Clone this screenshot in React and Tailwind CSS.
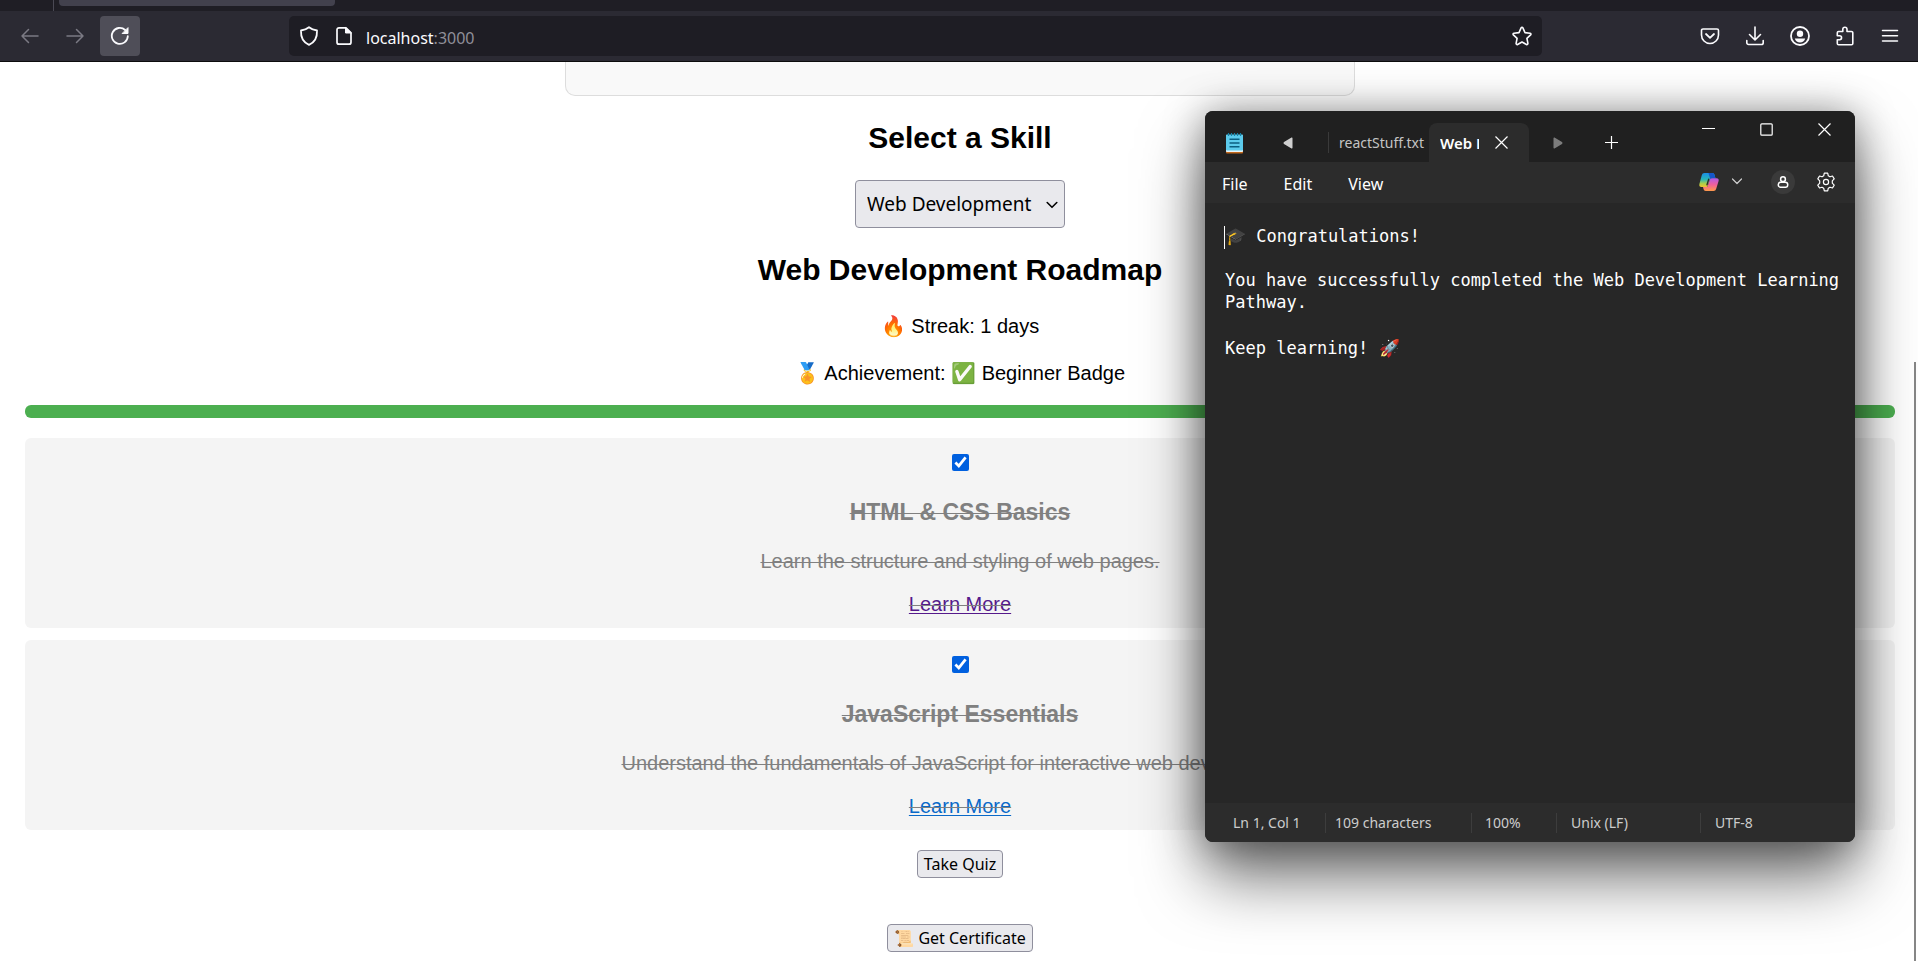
import React, { useState } from 'react';

const UI = 'font-["Noto_Sans",sans-serif]';

/* ---------- browser chrome icons ---------- */

function Icon({ children, className = 'size-5', box = 20 }) {
  return (
    <svg
      viewBox={`0 0 ${box} ${box}`}
      className={className}
      fill="none"
      stroke="currentColor"
      strokeWidth="1.5"
      strokeLinecap="round"
      strokeLinejoin="round"
      aria-hidden="true"
    >
      {children}
    </svg>
  );
}

const BackIcon = () => (
  <Icon>
    <path d="M18 10H2M8.5 3.5 2 10l6.5 6.5" />
  </Icon>
);
const ForwardIcon = () => (
  <Icon>
    <path d="M2 10h16M11.5 3.5 18 10l-6.5 6.5" />
  </Icon>
);
const ReloadIcon = () => (
  <Icon>
    <path strokeWidth="1.8" d="M17.8 10.2A8 8 0 1 1 15.2 4" />
    <path fill="currentColor" strokeWidth="1" d="M18 2v5.5h-5.5z" />
  </Icon>
);
const ShieldIcon = () => (
  <Icon>
    <path
      strokeWidth="1.8"
      d="M10 1.2c2.2 1.8 4.7 2.8 8 3.3.3 6.5-2 11.8-8 14.3-6-2.5-8.3-7.8-8-14.3 3.3-.5 5.8-1.5 8-3.3z"
    />
  </Icon>
);
const PageIcon = () => (
  <Icon>
    <path strokeWidth="1.7" d="M12 1.8H5A2 2 0 0 0 3 3.8v12.4a2 2 0 0 0 2 2h10a2 2 0 0 0 2-2V6.8z" />
    <path fill="currentColor" strokeWidth="1" d="M11.5 1.8v5.2H17z" />
  </Icon>
);
const StarIcon = () => (
  <Icon>
    <path
      strokeWidth="1.6"
      d="M10 1.3c.4 0 .7.2.9.6l2.1 4.7 5 .6c.9.1 1.2 1.1.6 1.7l-3.7 3.5 1 5c.1.9-.7 1.5-1.5 1.1L10 16l-4.4 2.5c-.8.4-1.6-.2-1.5-1.1l1-5-3.700-3.500c-.6-.6-.3-1.600.6-1.700l5-.6 2.100-4.700c.2-.4.5-.6.9-.6z"
    />
  </Icon>
);
const PocketIcon = () => (
  <Icon>
    <path strokeWidth="1.6" d="M3 3h14a1.5 1.5 0 0 1 1.5 1.5V9a8.500 8.500 0 0 1-17 0V4.500A1.500 1.500 0 0 1 3 3z" />
    <path strokeWidth="1.8" d="m6 8 4 3.800L14 8" />
  </Icon>
);
const DownloadIcon = () => (
  <Icon>
    <path strokeWidth="1.6" d="M10 1v12.500M4.500 8.500 10 14l5.500-5.500M1.800 14.500v2.200a1.800 1.800 0 0 0 1.800 1.800h12.800a1.800 1.800 0 0 0 1.800-1.800v-2.200" />
  </Icon>
);
const AccountIcon = () => (
  <Icon>
    <circle cx="10" cy="10" r="9" strokeWidth="1.8" />
    <circle cx="10" cy="7.8" r="3.2" fill="currentColor" stroke="none" />
    <path fill="currentColor" stroke="none" d="M4.800 12.600h10.400c-.7 2.500-2.700 4-5.200 4s-4.500-1.500-5.200-4z" />
  </Icon>
);
const ExtensionIcon = () => (
  <Icon>
    <path
      strokeWidth="1.6"
      d="M7.800 5.500V3.300a2.100 2.100 0 0 1 4.200 0v2.200h4.500a1.300 1.300 0 0 1 1.300 1.300v10.600a1.300 1.300 0 0 1-1.300 1.300H3.600a1.300 1.300 0 0 1-1.300-1.300v-3.700h2.300a1.900 1.900 0 0 0 0-3.900H2.300v-3a1.300 1.300 0 0 1 1.300-1.300z"
    />
  </Icon>
);
const MenuIcon = () => (
  <Icon>
    <path d="M2.500 4.500h15M2.500 9.700h15M2.500 14.900h15" />
  </Icon>
);

function ChromeButton({ label, className = '', children }) {
  return (
    <button type="button" aria-label={label} className={`flex h-10 w-10 items-center justify-center rounded ${className}`}>
      {children}
    </button>
  );
}

function Browser() {
  return (
    <header className="bg-[#1f1e25] text-[#fbfbfe]">
      <div className="flex h-[11px]">
        <div className="w-[54px] border-r border-[#4a4954]" />
        <div className="ml-[5px] h-[6px] w-[276px] rounded-b bg-[#42414d]" />
      </div>
      <div className="flex h-[51px] items-center border-b border-[#0c0c0d] bg-[#2b2a33]">
        <nav className="flex w-[289px] gap-[5px] pl-[10px]">
          <ChromeButton label="Back" className="text-[#7b7a84]">
            <BackIcon />
          </ChromeButton>
          <ChromeButton label="Forward" className="text-[#7b7a84]">
            <ForwardIcon />
          </ChromeButton>
          <ChromeButton label="Reload" className="bg-[#4f4e58]">
            <ReloadIcon />
          </ChromeButton>
        </nav>
        <div className="flex h-10 flex-1 items-center rounded-[5px] bg-[#1e1d24] pl-[10px]">
          <ShieldIcon />
          <span className="ml-[15px]">
            <PageIcon />
          </span>
          <span className={`ml-3 flex-1 pt-1 text-base leading-6 ${UI}`}>
            localhost<span className="text-[#8f8f99]">:3000</span>
          </span>
          <ChromeButton label="Bookmark this page">
            <StarIcon />
          </ChromeButton>
        </div>
        <div className="flex w-[376px] justify-end gap-[5px] pr-2">
          <ChromeButton label="Save to Pocket">
            <PocketIcon />
          </ChromeButton>
          <ChromeButton label="Downloads">
            <DownloadIcon />
          </ChromeButton>
          <ChromeButton label="Account">
            <AccountIcon />
          </ChromeButton>
          <ChromeButton label="Extensions">
            <ExtensionIcon />
          </ChromeButton>
          <ChromeButton label="Menu">
            <MenuIcon />
          </ChromeButton>
        </div>
      </div>
    </header>
  );
}

/* ---------- web page ---------- */

const STEPS = [
  {
    id: 'html',
    title: 'HTML & CSS Basics',
    text: 'Learn the structure and styling of web pages.',
    link: 'text-[#551a8b]',
  },
  {
    id: 'js',
    title: 'JavaScript Essentials',
    text: 'Understand the fundamentals of JavaScript for interactive web development.',
    link: 'text-[#0969c8]',
  },
];

function Step({ step }) {
  const [done, setDone] = useState(true);
  return (
    <li
      className={`flex flex-col items-center rounded-md bg-[#f4f4f4] pt-4 pb-3 ${
        done ? 'text-[#808080] line-through decoration-1' : 'text-black'
      }`}
    >
      <input
        type="checkbox"
        aria-label={step.title}
        checked={done}
        onChange={() => setDone(!done)}
        className="size-[17px] accent-[#0060df]"
      />
      <h3 className="mt-7 text-[23px] leading-[26px] font-bold">{step.title}</h3>
      <p className="mt-[25px] text-xl leading-[23px]">{step.text}</p>
      <p className="mt-5 text-xl leading-[23px]">
        <a href={`#${step.id}`} className={`underline decoration-1 underline-offset-2 ${step.link}`}>
          Learn More
        </a>
      </p>
    </li>
  );
}

function PageButton({ className, children }) {
  return (
    <button
      type="button"
      className={`rounded border border-[#8f8f9d] bg-[#e9e9ed] px-1.5 text-base leading-[26px] text-black ${UI} ${className}`}
    >
      {children}
    </button>
  );
}

function Page() {
  return (
    <main className='flex flex-col items-center pr-[23px] pl-[25px] font-["Liberation_Sans",Arial,sans-serif] text-black'>
      <div className="h-[34px] w-[790px] rounded-b-[10px] border border-t-0 border-[#dddddd] bg-[#f9f9f9]" />
      <h2 className="mt-[25px] text-3xl leading-[34px] font-bold">Select a Skill</h2>
      <div className="relative mt-[25px]">
        <select
          aria-label="Select a Skill"
          defaultValue="web"
          className={`h-12 w-[210px] appearance-none rounded border border-[#8f8f9d] bg-[#e9e9ed] pl-[11px] text-[19px] ${UI}`}
        >
          <option value="web">Web Development</option>
        </select>
        <svg viewBox="0 0 12 8" className="pointer-events-none absolute top-[21px] right-[7px] h-2 w-3" fill="none" stroke="black" strokeWidth="1.6" strokeLinecap="round" strokeLinejoin="round" aria-hidden="true">
          <path d="m1.200 1.500 4.800 4.800 4.800-4.800" />
        </svg>
      </div>
      <h2 className="mt-[25px] text-3xl leading-[34px] font-bold">Web Development Roadmap</h2>
      <p className="mt-[26px] text-xl leading-[27px]">🔥 Streak: 1 days</p>
      <p className="mt-5 text-xl leading-[27px]">🏅 Achievement: ✅ Beginner Badge</p>
      <div className="mt-[18px] h-[13px] w-full rounded-md bg-[#4caf50]" role="progressbar" aria-label="Progress" aria-valuenow={100} />
      <ul className="mt-5 flex w-full flex-col gap-3">
        {STEPS.map((s) => (
          <Step key={s.id} step={s} />
        ))}
      </ul>
      <PageButton className="mt-5">Take Quiz</PageButton>
      <PageButton className="mt-[46px]">📜 Get Certificate</PageButton>
    </main>
  );
}

/* ---------- notepad window ---------- */

function NotepadLogo() {
  return (
    <svg viewBox="0 0 17 22" className="h-[22px] w-[17px]" aria-hidden="true">
      <rect x="0" y="18" width="17" height="3.5" rx="1" fill="#c2681c" />
      <rect x="0" y="3" width="17" height="17" rx=".8" fill="#e8f6fb" />
      <rect x="0" y="2.500" width="17" height="16" rx=".8" fill="#5ccbec" />
      <path d="M2.500 1v3M5.500 1v3M8.500 1v3M11.500 1v3M14.500 1v3" stroke="#1583a8" strokeWidth="1.2" />
      <path d="M3.500 7.300h10M3.500 11h10M3.500 14.700h10" stroke="#0b5f80" strokeWidth="1.5" />
    </svg>
  );
}

function CopilotLogo() {
  return (
    <svg viewBox="0 0 20 18" className="h-[18px] w-5" aria-hidden="true">
      <defs>
        <linearGradient id="cp-left" x1="0" y1="0" x2="0" y2="1">
          <stop offset="0" stopColor="#1a8fe8" />
          <stop offset=".45" stopColor="#27b6b8" />
          <stop offset=".75" stopColor="#a9cf4b" />
          <stop offset="1" stopColor="#f2c22f" />
        </linearGradient>
        <linearGradient id="cp-right" x1="0" y1="0" x2="0" y2="1">
          <stop offset="0" stopColor="#b05be8" />
          <stop offset=".5" stopColor="#f0609c" />
          <stop offset="1" stopColor="#ff9a4a" />
        </linearGradient>
      </defs>
      <path d="M5.600 0h7.600c1.500 0 2 .8 2.400 2l.9 3.200h-3.300c-1.500 0-2.200.7-2.600 2L9 12.500C8.600 13.700 8 14 7 14H2.500C.6 14 0 12.700.4 11L2.700 2.500C3.200.8 4 0 5.600 0z" fill="url(#cp-left)" />
      <path d="M9.500 0h3.700c1.500 0 2 .8 2.400 2l.9 3.200h-3.300c-.9 0-1.500.2-2 .8z" fill="#1556c9" />
      <path d="M14.400 18H6.800c-1.300 0-1.900-.8-2.300-2L4 14h3c1 0 1.600-.4 2-1.500l1.600-5.300c.4-1.300 1.100-2 2.600-2h4.300c1.900 0 2.500 1.100 2.100 2.800l-2.300 7.500c-.5 1.700-1.300 2.500-2.900 2.500z" fill="url(#cp-right)" />
      <path d="m9.700 6.200-1.700 5.600" stroke="#2c2c2c" strokeWidth="1.4" strokeLinecap="round" />
    </svg>
  );
}

function GearIcon() {
  return (
    <svg viewBox="0 0 20 20" className="size-5" fill="none" stroke="currentColor" strokeWidth="1.2" strokeLinejoin="round" aria-hidden="true">
      <path d="M8.300 1.200h3.400l.6 2.600 1.700 1 2.500-.8 1.700 2.900-1.900 1.900v2.400l1.900 1.900-1.700 2.900-2.500-.8-1.700 1-.6 2.600H8.300l-.6-2.600-1.700-1-2.500.8-1.700-2.900 1.900-1.900V8.800L1.800 6.900 3.500 4l2.500.8 1.700-1z" />
      <circle cx="10" cy="10" r="2.6" />
    </svg>
  );
}

function CloseIcon() {
  return (
    <svg viewBox="0 0 13 13" className="size-[13px]" stroke="currentColor" strokeWidth="1.2" aria-hidden="true">
      <path d="m.5.5 12 12M12.500.500l-12 12" />
    </svg>
  );
}

function Notepad() {
  return (
    <section
      aria-label="Notepad"
      className={`absolute top-[111px] right-[63px] flex h-[731px] w-[650px] flex-col overflow-hidden rounded-lg bg-[#272727] text-white shadow-[0_36px_64px_rgba(0,0,0,0.55),0_2px_40px_rgba(0,0,0,0.4)] ${UI}`}
    >
      <div className="flex h-[51px] items-end bg-[#202020] pl-[21px]">
        <div className="flex h-[39px] flex-1 items-center">
          <NotepadLogo />
          <button type="button" aria-label="Scroll tabs left" className="ml-10">
            <svg viewBox="0 0 10 12" className="h-3 w-[10px]" fill="#cfcfcf" aria-hidden="true">
              <path d="M8.500.6c.6-.4 1 0 1 .6v9.600c0 .6-.4 1-1 .6L1 6.900c-.6-.5-.6-1.300 0-1.800z" />
            </svg>
          </button>
          <div className="ml-[35px] h-[21px] w-px bg-[#3a3a3a]" />
          <button type="button" className="ml-[10px] w-[86px] text-left text-sm leading-5 whitespace-nowrap text-[#c4c4c4]">
            reactStuff.txt
          </button>
          <div className="ml-1 flex h-[39px] w-[100px] items-center rounded-t-lg bg-[#2c2c2c] pl-[11px]">
            <span className="w-[39px] overflow-hidden text-[15px] leading-5 font-semibold whitespace-nowrap">Web Development</span>
            <button type="button" aria-label="Close tab" className="ml-4">
              <CloseIcon />
            </button>
          </div>
          <button type="button" aria-label="Scroll tabs right" className="ml-6">
            <svg viewBox="0 0 10 12" className="h-3 w-[10px]" fill="#7c7c7c" aria-hidden="true">
              <path d="M1.500.6c-.6-.4-1 0-1 .6v9.600c0 .6.4 1 1 .6L9 6.900c.6-.5.6-1.300 0-1.800z" />
            </svg>
          </button>
          <button type="button" aria-label="New tab" className="ml-[42px]">
            <svg viewBox="0 0 13 13" className="size-[13px]" stroke="currentColor" strokeWidth="1.2" aria-hidden="true">
              <path d="M6.500 0v13M0 6.500h13" />
            </svg>
          </button>
        </div>
        <div className="flex gap-[45px] self-start pt-3 pr-6">
          <button type="button" aria-label="Minimize">
            <svg viewBox="0 0 13 13" className="size-[13px]" stroke="currentColor" aria-hidden="true">
              <path d="M0 5.500h13" />
            </svg>
          </button>
          <button type="button" aria-label="Maximize">
            <svg viewBox="0 0 13 13" className="size-[13px]" fill="none" stroke="currentColor" strokeWidth="1.2" aria-hidden="true">
              <rect x=".8" y=".8" width="11.4" height="11.4" rx="1" />
            </svg>
          </button>
          <button type="button" aria-label="Close">
            <CloseIcon />
          </button>
        </div>
      </div>

      <div className="flex h-[41px] items-center justify-between bg-[#2c2c2c] pr-[19px] pl-[17px] text-base leading-6">
        <div className="flex gap-9 pt-0.5">
          <button type="button">File</button>
          <button type="button">Edit</button>
          <button type="button">View</button>
        </div>
        <div className="flex items-center pb-0.5">
          <button type="button" aria-label="Copilot" className="flex items-center gap-3">
            <CopilotLogo />
            <svg viewBox="0 0 12 7" className="h-[7px] w-3" fill="none" stroke="#cfcfcf" strokeWidth="1.2" strokeLinecap="round" strokeLinejoin="round" aria-hidden="true">
              <path d="m1.500 1 4.500 4.500L10.500 1" />
            </svg>
          </button>
          <button type="button" aria-label="Account" className="ml-7 flex size-6 items-center justify-center rounded-full bg-[#3a3a3a]">
            <svg viewBox="0 0 12 12" className="size-3" fill="none" stroke="currentColor" strokeWidth="1.5" aria-hidden="true">
              <circle cx="6" cy="3.200" r="2.4" />
              <rect x="1.300" y="6.300" width="9.4" height="4.900" rx="2.3" />
            </svg>
          </button>
          <button type="button" aria-label="Settings" className="ml-[21px]">
            <GearIcon />
          </button>
        </div>
      </div>

      <div className='flex-1 pt-[22px] pr-2 pl-5 font-["DejaVu_Sans_Mono",monospace] text-[17px] leading-[22px]'>
        <p>
          <span className="-ml-px inline-block h-[23px] w-px bg-white align-middle" />
          🎓 Congratulations!
        </p>
        <p className="mt-5">
          You have successfully completed the Web Development Learning Pathway.
        </p>
        <p className="mt-6">Keep learning! 🚀</p>
      </div>

      <footer className="flex h-[39px] items-center bg-[#2c2c2c] text-sm leading-5 text-[#cccccc]">
        <span className="w-[120px] pl-7">Ln 1, Col 1</span>
        <span className="flex h-5 w-[146px] items-center border-l border-[#3d3d3d] pl-[9px]">109 characters</span>
        <span className="flex h-5 w-[85px] items-center border-l border-[#3d3d3d] pl-[13px]">100%</span>
        <span className="flex h-5 w-36 items-center border-l border-[#3d3d3d] pl-[14px]">Unix (LF)</span>
        <span className="flex h-5 items-center border-l border-[#3d3d3d] pl-[14px]">UTF-8</span>
      </footer>
    </section>
  );
}

export default function App() {
  return (
    <div className="relative min-h-screen overflow-hidden bg-white">
      <Browser />
      <Page />
      <div className="absolute top-[362px] right-[2px] bottom-1 w-[2px] bg-[#868686]" />
      <Notepad />
    </div>
  );
}
